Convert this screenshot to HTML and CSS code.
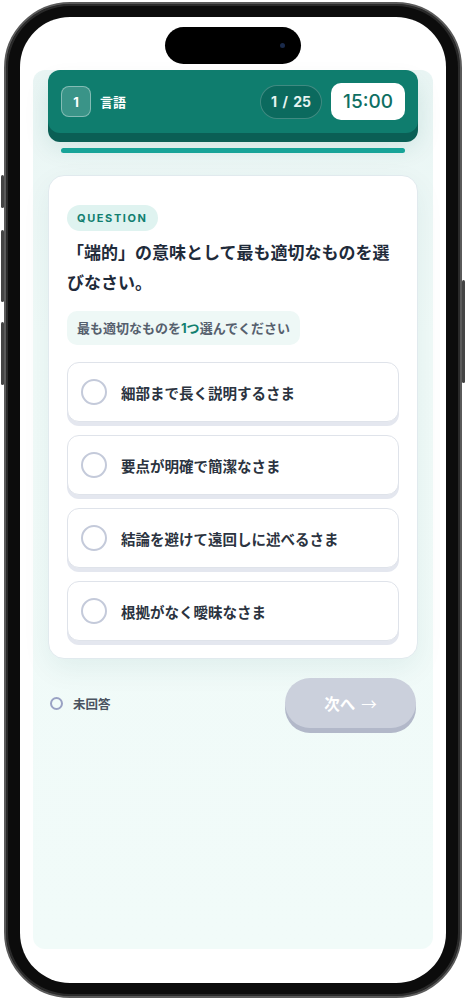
FILE: index.html
```html
<!DOCTYPE html>
<html lang="ja">
<head>
    <meta charset="UTF-8">
    <meta name="viewport" content="width=device-width, initial-scale=1.0">
    <title>適性検査 - 言語</title>
    <link rel="stylesheet" href="styles.css">
</head>
<body>
    <div class="phone">
        <span class="side-btn left b1"></span>
        <span class="side-btn left b2"></span>
        <span class="side-btn left b3"></span>
        <span class="side-btn right b4"></span>

        <div class="screen">
            <div class="island"><span class="camera"></span></div>

            <div class="app">
                <!-- Section header -->
                <div class="header">
                    <div class="section">
                        <span class="section-no">1</span>
                        <span class="section-name">言語</span>
                    </div>
                    <div class="header-right">
                        <span class="counter">1 / 25</span>
                        <span class="timer">15:00</span>
                    </div>
                </div>

                <div class="progress"><div class="progress-fill" style="width: 100%;"></div></div>

                <!-- Question card -->
                <div class="card">
                    <span class="tag">QUESTION</span>
                    <p class="question">「端的」の意味として最も適切なものを選びなさい。</p>
                    <div class="hint">最も適切なものを<span class="hint-em">1つ</span>選んでください</div>

                    <ul class="options">
                        <li class="option"><span class="radio"></span>細部まで長く説明するさま</li>
                        <li class="option"><span class="radio"></span>要点が明確で簡潔なさま</li>
                        <li class="option"><span class="radio"></span>結論を避けて遠回しに述べるさま</li>
                        <li class="option"><span class="radio"></span>根拠がなく曖昧なさま</li>
                    </ul>
                </div>

                <!-- Footer -->
                <div class="footer">
                    <div class="status"><span class="status-dot"></span>未回答</div>
                    <button class="next-btn" disabled>次へ<span class="arrow">→</span></button>
                </div>
            </div>
        </div>
    </div>
</body>
</html>
```

FILE: styles.css
```css
body {
    margin: 0;
    padding: 0;
    background-color: #fff;
    font-family: Inter, "Noto Sans CJK JP", sans-serif;
}
.phone {
    position: relative;
    box-sizing: border-box;
    width: 458px;
    height: 996px;
    margin: 2px 4px 0;
    padding: 13px 14px;
    background-color: #0c0c0c;
    border: 2px solid #5a5a5a;
    border-radius: 66px;
    box-shadow: inset 0 0 0 2px #2a2a2a;
}
.side-btn {
    position: absolute;
    width: 3px;
    background-color: #444;
    border-radius: 2px;
}
.side-btn.left {
    left: -5px;
}
.side-btn.right {
    right: -5px;
}
.b1 { top: 171px; height: 33px; }
.b2 { top: 226px; height: 72px; }
.b3 { top: 318px; height: 63px; }
.b4 { top: 276px; height: 103px; }

.screen {
    box-sizing: border-box;
    height: 100%;
    padding: 10px 13px 34px;
    background-color: #fff;
    border-radius: 50px;
    display: flex;
    flex-direction: column;
}
.island {
    position: relative;
    width: 136px;
    height: 37px;
    margin: 0 auto 6px;
    background-color: #000;
    border-radius: 19px;
}
.camera {
    position: absolute;
    right: 16px;
    top: 16px;
    width: 5px;
    height: 5px;
    border-radius: 50%;
    background-color: #1a2a4a;
}
.app {
    flex: 1;
    padding: 0 15px;
    background: linear-gradient(#e9f5f4, #f0faf8 30%, #f1fbf9);
    border-radius: 12px;
}

/* header */
.header {
    height: 63px;
    padding: 0 13px;
    display: flex;
    align-items: center;
    justify-content: space-between;
    background-color: #0f7d6e;
    border-radius: 12px;
    box-shadow: 0 9px 0 #0a5f55, 0 14px 24px rgba(10, 95, 85, 0.12);
    color: #fff;
}
.section {
    display: flex;
    align-items: center;
    gap: 9px;
}
.section-no {
    box-sizing: border-box;
    width: 30px;
    height: 31px;
    display: flex;
    align-items: center;
    justify-content: center;
    background-color: rgba(255, 255, 255, 0.18);
    border: 1px solid rgba(255, 255, 255, 0.38);
    border-radius: 8px;
    font-size: 13px;
    font-weight: 700;
}
.section-name {
    font-size: 13px;
    font-weight: 700;
}
.header-right {
    display: flex;
    align-items: center;
    gap: 9px;
}
.counter {
    box-sizing: border-box;
    width: 62px;
    height: 34px;
    display: flex;
    align-items: center;
    justify-content: center;
    background-color: #0b6a5e;
    border: 1px solid rgba(255, 255, 255, 0.22);
    border-radius: 17px;
    font-size: 14px;
    font-weight: 700;
    word-spacing: 2px;
    color: #e6f3f1;
}
.timer {
    width: 74px;
    height: 37px;
    display: flex;
    align-items: center;
    justify-content: center;
    background-color: #fff;
    border-radius: 10px;
    font-size: 19px;
    font-weight: 500;
    color: #0e6f63;
}
.progress {
    height: 5px;
    margin: 15px 13px 0;
    background-color: #d5ecea;
    border-radius: 3px;
}
.progress-fill {
    height: 100%;
    background-color: #17a498;
    border-radius: 3px;
}

/* card */
.card {
    margin-top: 22px;
    padding: 29px 18px 17px;
    background-color: #fff;
    border: 1px solid #e1eaee;
    border-radius: 16px;
    box-shadow: 0 10px 28px rgba(20, 90, 90, 0.07);
}
.tag {
    display: inline-block;
    height: 26px;
    line-height: 26px;
    padding: 0 10px;
    background-color: #dff3f0;
    border-radius: 13px;
    font-size: 11px;
    font-weight: 700;
    letter-spacing: 1.6px;
    color: #127f70;
}
.question {
    margin: 7px 0 0;
    font-size: 17px;
    line-height: 30px;
    font-weight: 700;
    color: #1f2b3a;
}
.hint {
    display: inline-block;
    margin-top: 13px;
    height: 34px;
    line-height: 34px;
    padding: 0 10px;
    background-color: #eef8f6;
    border-radius: 10px;
    font-size: 13px;
    font-weight: 700;
    color: #56606e;
}
.hint-em {
    color: #12806f;
}
.options {
    list-style-type: none;
    margin: 17px 0 0;
    padding: 0;
    display: flex;
    flex-direction: column;
    gap: 13px;
}
.option {
    box-sizing: border-box;
    height: 60px;
    padding: 0 13px;
    display: flex;
    align-items: center;
    gap: 14px;
    background-color: #fff;
    border: 1px solid #dfe3ea;
    border-radius: 12px;
    box-shadow: 0 4px 0 #e4e7ef;
    font-size: 14.5px;
    font-weight: 700;
    color: #2b3340;
}
.radio {
    box-sizing: border-box;
    width: 26px;
    height: 26px;
    border: 2px solid #c4cada;
    border-radius: 50%;
    flex-shrink: 0;
}

/* footer */
.footer {
    margin-top: 19px;
    padding: 0 2px;
    display: flex;
    align-items: flex-start;
    justify-content: space-between;
}
.status {
    margin-top: 16px;
    display: flex;
    align-items: center;
    gap: 10px;
    font-size: 12.5px;
    font-weight: 700;
    color: #4a5360;
}
.status-dot {
    box-sizing: border-box;
    width: 13px;
    height: 13px;
    border: 2.5px solid #9aa2c4;
    border-radius: 50%;
}
.next-btn {
    width: 131px;
    height: 50px;
    border: none;
    border-radius: 25px;
    background-color: #cbd0dc;
    box-shadow: 0 5px 0 #b2b8c9;
    font-family: inherit;
    font-size: 15.5px;
    font-weight: 700;
    color: #fff;
    cursor: default;
}
.arrow {
    margin-left: 6px;
    font-family: "Noto Sans CJK JP", sans-serif;
    font-weight: 400;
}
```
